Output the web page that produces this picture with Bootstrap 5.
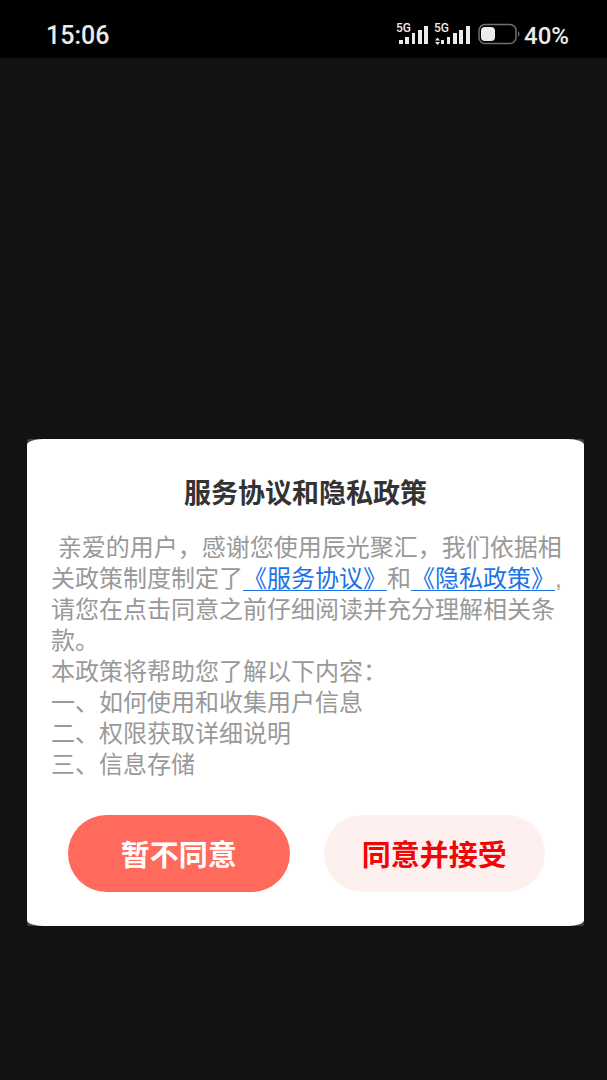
<!DOCTYPE html>
<html lang="zh-CN">
<head>
<meta charset="utf-8">
<meta name="viewport" content="width=device-width, initial-scale=1">
<title>服务协议和隐私政策</title>
<link href="https://cdn.jsdelivr.net/npm/bootstrap@5.3.0/dist/css/bootstrap.min.css" rel="stylesheet">
<style>
body { background: #121212; font-family: "Noto Sans CJK SC", sans-serif; }
.status-bar { background: #000; color: #ebebeb; height: 58px; padding: 14px 38px 0 46px; font: 500 25px/46px Roboto, sans-serif; }
.status-icons { width: 128px; height: 28px; }
.battery-level { font-size: 24px; }
.space-above { flex: 380 1 0; }
.space-below { flex: 154 1 0; }
.agreement { margin: 0 23px 0 27px; background: #444; border-radius: 2px; }
.agreement-body { background: #fff; border-radius: 16px / 6px; padding: 33px 20px 34px 24px; }
.agreement-title { font-size: 27px; line-height: 40px; color: #333; margin: 0 4px 20px 0; }
.agreement-text { font-family: "Liberation Sans", "Noto Sans CJK SC", sans-serif; font-size: 24px; line-height: 31px; color: #999; margin-bottom: 35px; }
.agreement-text a { color: #1a73e8; text-decoration: underline; text-decoration-thickness: 1px; text-underline-offset: 3px; }
.actions { padding: 0 19px 0 17px; gap: 34px; }
.actions .btn { flex: 1 1 0; height: 77px; border: 0; font-size: 29px; line-height: 40px; padding: 0; }
.btn-decline, .btn-decline:hover { background: #ff6a5c; color: #fff; }
.btn-accept, .btn-accept:hover { background: #fff0f0; color: #f20505; }
</style>
</head>
<body class="d-flex flex-column min-vh-100">
<header class="status-bar d-flex justify-content-between align-items-center">
  <time>15:06</time>
  <div class="d-flex align-items-center">
    <svg class="status-icons" viewBox="0 0 128 28" fill="#ebebeb" aria-hidden="true">
      <g font-family="Roboto, sans-serif" font-size="12" font-weight="500">
        <text x="0" y="10">5G</text><text x="38" y="10">5G</text>
      </g>
      <path d="M3 18h4v4H3zM9 15h4v7H9zM16 11h3v11h-3zM22 8h4v14h-4zM28 4h4v18h-4z"/>
      <path d="M45 18h3v4h-3zM51 15h3v7h-3zM57 11h4v11h-4zM63 8h4v14h-4zM70 4h4v18h-4z"/>
      <path d="M39 18.500l2.500-3 2.500 3zM39 20l2.500 3 2.500-3z"/>
      <rect x="83" y="2.500" width="37" height="19" rx="6" fill="none" stroke="#707070" stroke-width="1.500"/>
      <rect x="85" y="5" width="14" height="14" rx="4"/>
      <path d="M122 9q3 3 0 6z" fill="#707070"/>
    </svg>
    <span class="battery-level">40%</span>
  </div>
</header>
<div class="space-above"></div>
<main class="agreement" role="dialog" aria-labelledby="agreement-title">
  <div class="agreement-body">
    <h1 class="agreement-title fw-bold text-center" id="agreement-title">服务协议和隐私政策</h1>
    <div class="agreement-text">
      <p class="mb-0">&nbsp;亲爱的用户，感谢您使用辰光聚汇，我们依据相关政策制度制定了<a href="#service">《服务协议》</a>和<a href="#privacy">《隐私政策》</a>,请您在点击同意之前仔细阅读并充分理解相关条款。</p>
      <p class="mb-0">本政策将帮助您了解以下内容：</p>
      <p class="mb-0">一、如何使用和收集用户信息</p>
      <p class="mb-0">二、权限获取详细说明</p>
      <p class="mb-0">三、信息存储</p>
    </div>
    <div class="actions d-flex">
      <button type="button" class="btn btn-decline rounded-pill fw-bold">暂不同意</button>
      <button type="button" class="btn btn-accept rounded-pill fw-bold">同意并接受</button>
    </div>
  </div>
</main>
<div class="space-below"></div>
<script src="https://cdn.jsdelivr.net/npm/bootstrap@5.3.0/dist/js/bootstrap.bundle.min.js"></script>
</body>
</html>
